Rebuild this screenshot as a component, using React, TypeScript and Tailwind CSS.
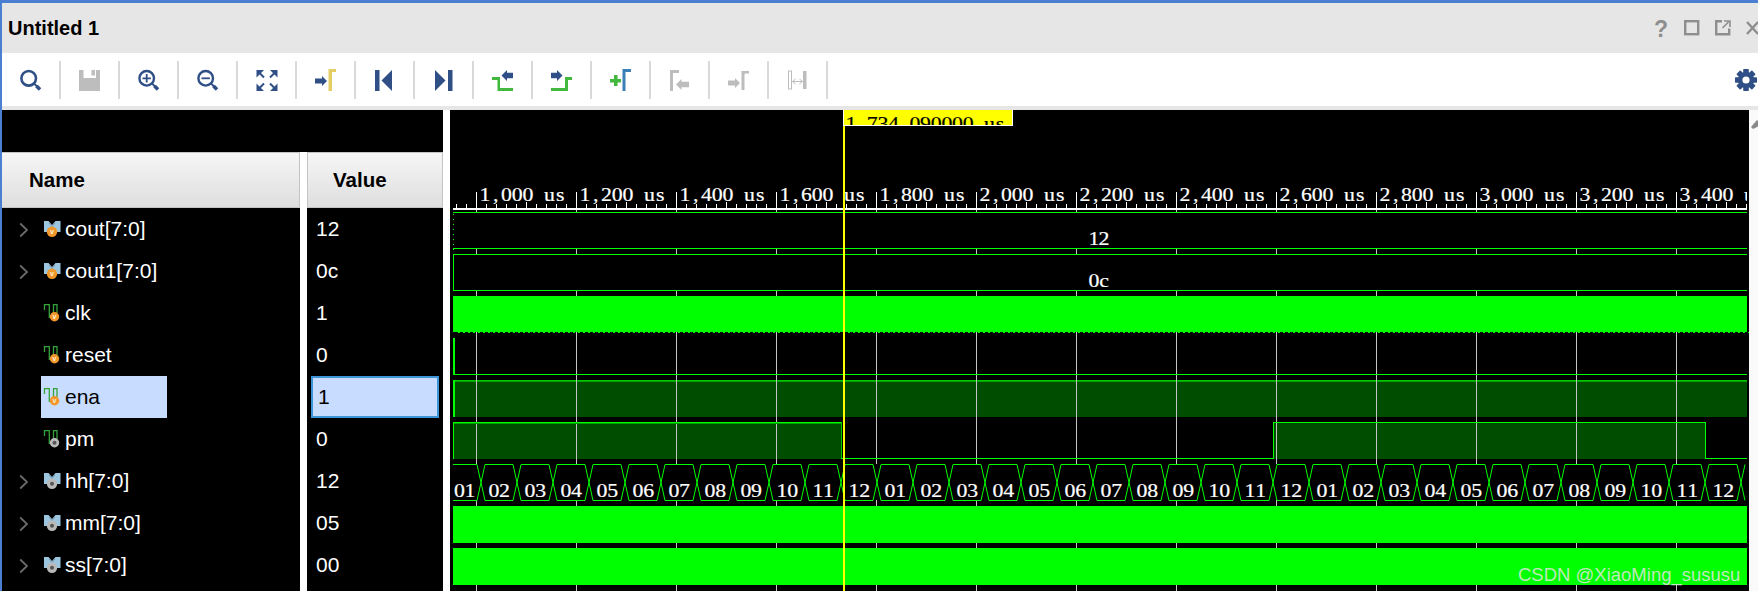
import React from "react";

const NAVY = "#2f4f86";
const GREEN = "#43b83f";
const GRAY = "#bdbdbd";

function Arrow({ x, y, w, h, dir, color }: { x: number; y: number; w: number; h: number; dir: "l" | "r"; color: string }) {
  const head = h * 0.5;
  const t = h * 0.25;
  const d =
    dir === "r"
      ? `M${x} ${y + t}H${x + w - head}V${y}L${x + w} ${y + h / 2}L${x + w - head} ${y + h}V${y + h - t}H${x}Z`
      : `M${x + w} ${y + t}H${x + head}V${y}L${x} ${y + h / 2}L${x + head} ${y + h}V${y + h - t}H${x + w}Z`;
  return <path d={d} fill={color} />;
}

function Ico({ children }: { children: React.ReactNode }) {
  return (
    <svg width="22" height="22" viewBox="0 0 22 22" shapeRendering="geometricPrecision">
      {children}
    </svg>
  );
}

function Lens({ sw }: { sw: number }) {
  return (
    <>
      <circle cx="8.7" cy="9.3" r="7.3" fill="none" stroke={NAVY} strokeWidth={sw} />
      <path d="M14 14.5l3 3" stroke={NAVY} strokeWidth="1.8" />
      <path d="M16.5 17l3.5 3.5" stroke={NAVY} strokeWidth="3.6" />
    </>
  );
}

const icons: React.ReactNode[] = [
  <Ico key="a">
    <Lens sw={2.6} />
  </Ico>,
  <Ico key="b">
    <path d="M0 1H4.5V9H17V1H21V22H0Z" fill={GRAY} />
    <rect x="12.5" y="1" width="3.5" height="5.5" fill={GRAY} />
  </Ico>,
  <Ico key="c">
    <Lens sw={2.4} />
    <path d="M4.5 9.3h8.4M8.7 5.1v8.4" stroke={NAVY} strokeWidth="1.8" />
  </Ico>,
  <Ico key="d">
    <Lens sw={2.4} />
    <path d="M4.5 9.3h8.4" stroke={NAVY} strokeWidth="1.8" />
  </Ico>,
  <Ico key="e">
    <path d="M0.5 1H8L0.5 8.5ZM21.5 1H14L21.5 8.5ZM0.5 22H8L0.5 14.5ZM21.5 22H14L21.5 14.5Z" fill={NAVY} />
    <path d="M3 3.5l5 5M19 3.5l-5 5M3 19.5l5-5M19 19.5l-5-5" stroke={NAVY} strokeWidth="2" />
  </Ico>,
  <Ico key="f">
    <Arrow x={0} y={7} w={12} h={10} dir="r" color={NAVY} />
    <path d="M13.5 22V0H21V3H17V22Z" fill="#e4cd62" />
  </Ico>,
  <Ico key="g">
    <rect x="1" y="1" width="4.5" height="21" fill={NAVY} />
    <path d="M18 1V22L7.5 11.5Z" fill={NAVY} />
  </Ico>,
  <Ico key="h">
    <path d="M2 1V22L12.5 11.5Z" fill={NAVY} />
    <rect x="15" y="1" width="4.5" height="21" fill={NAVY} />
  </Ico>,
  <Ico key="i">
    <path d="M0 8H8V19H21V22H5.5V11H0Z" fill={GREEN} />
    <Arrow x={9.5} y={1} w={11.5} h={11} dir="l" color={NAVY} />
  </Ico>,
  <Ico key="j">
    <path d="M0 19H14V8H21V11H17V22H0Z" fill={GREEN} />
    <Arrow x={0} y={1} w={11.5} h={11} dir="r" color={NAVY} />
  </Ico>,
  <Ico key="k">
    <path d="M0 10H4V6H7.5V10H11V13.5H7.5V17H4V13.5H0Z" fill={GREEN} />
    <path d="M12.5 22V0H21V3H15.5V22Z" fill="#3a7fb5" />
  </Ico>,
  <Ico key="l">
    <path d="M1 22V1H10V4H4V22Z" fill={GRAY} />
    <Arrow x={7} y={10} w={13} h={11} dir="l" color={GRAY} />
  </Ico>,
  <Ico key="m">
    <Arrow x={0} y={9} w={12} h={10} dir="r" color={GRAY} />
    <path d="M13.5 21V2H21V4.5H16.5V21Z" fill={GRAY} />
  </Ico>,
  <Ico key="n">
    <rect x="1.5" y="2" width="3" height="18" fill="none" stroke={GRAY} strokeWidth="1" />
    <rect x="16" y="2" width="3.5" height="18" fill={GRAY} />
    <path d="M5.5 12.5h10M5.5 12.5l3-2.5M5.5 12.5l3 2.5M15.5 12.5l-3-2.5M15.5 12.5l-3 2.5" stroke={GRAY} strokeWidth="1" fill="none" />
  </Ico>,
];

function Gear() {
  return (
    <svg width="22" height="22" viewBox="0 0 22 22">
      {[0, 45, 90, 135].map((a) => (
        <rect key={a} x="8.2" y="0" width="5.6" height="22" rx="0.8" fill={NAVY} transform={`rotate(${a} 11 11)`} />
      ))}
      <circle cx="11" cy="11" r="8" fill={NAVY} />
      <circle cx="11" cy="11" r="3.6" fill="#fff" />
    </svg>
  );
}

function Medal({ cx, cy, orange, r }: { cx: number; cy: number; orange: boolean; r: number }) {
  return orange ? (
    <g>
      <circle cx={cx} cy={cy} r={r} fill="#f0962b" />
      <text x={cx} y={cy + 2.6} textAnchor="middle" fontSize="7" fontWeight="700" fill="#fff2d8" className="font-['Liberation_Sans']">
        v
      </text>
    </g>
  ) : (
    <g>
      <circle cx={cx} cy={cy} r={r} fill="#b9b9b9" />
      <circle cx={cx} cy={cy} r="2" fill="#555" />
    </g>
  );
}

function SigIcon({ bus, orange }: { bus: boolean; orange: boolean }) {
  return (
    <svg width="19" height="18" viewBox="0 0 19 18" className="shrink-0">
      {bus ? (
        <>
          <path d="M1 1H5.5L9 5L12.5 1H17.5V12H1Z" fill="#9cc6e0" />
          <path d="M6 3l3 3.5L12 3" stroke="#6f8ea3" strokeWidth="0.8" fill="none" />
        </>
      ) : (
        <>
          <path d="M1.5 6V0.7H6.3V14" fill="none" stroke="#35a23a" strokeWidth="1.3" />
          <path d="M10.5 10V0.7H14V9" fill="none" stroke="#35a23a" strokeWidth="1.3" />
        </>
      )}
      <Medal cx={bus ? 9 : 11.5} cy={bus ? 11.8 : 12.8} r={bus ? 5.2 : 4.7} orange={orange} />
    </svg>
  );
}

type Row = { name: string; value: string; bus: boolean; orange: boolean; selected?: boolean };
const rows: Row[] = [
  { name: "cout[7:0]", value: "12", bus: true, orange: true },
  { name: "cout1[7:0]", value: "0c", bus: true, orange: true },
  { name: "clk", value: "1", bus: false, orange: true },
  { name: "reset", value: "0", bus: false, orange: true },
  { name: "ena", value: "1", bus: false, orange: true, selected: true },
  { name: "pm", value: "0", bus: false, orange: false },
  { name: "hh[7:0]", value: "12", bus: true, orange: false },
  { name: "mm[7:0]", value: "05", bus: true, orange: false },
  { name: "ss[7:0]", value: "00", bus: true, orange: false },
];

const SX = 1.15;

function Mono({ s, cx, y, adv, fill }: { s: string; cx: number; y: number; adv: number; fill: string }) {
  const xs = s
    .split("")
    .map((_, i) => ((cx + i * adv) / SX).toFixed(2))
    .join(" ");
  return (
    <g transform={`scale(${SX} 1)`}>
      <text x={xs} y={y} textAnchor="middle" fontSize="19" fill={fill} stroke={fill} strokeWidth="0.2" className="font-['Liberation_Serif']">
        {s}
      </text>
    </g>
  );
}

const X0 = 453;
const X1 = 1747;
const GRID = Array.from({ length: 13 }, (_, i) => 476 + i * 100);
const LABELS = ["1,000", "1,200", "1,400", "1,600", "1,800", "2,000", "2,200", "2,400", "2,600", "2,800", "3,000", "3,200", "3,400"];
const MINOR = Array.from({ length: 130 }, (_, i) => 456 + i * 10).filter((x) => x < X1);
const CROSS = Array.from({ length: 36 }, (_, i) => 481 + i * 36);
const HH_TOP = 464;
const HH_BOT = 500;

function busPath() {
  let d = `M${X0} ${HH_TOP + 0.5}H${CROSS[0] - 4}L${CROSS[0] + 4} ${HH_BOT + 0.5}`;
  let b = `M${X0} ${HH_BOT + 0.5}H${CROSS[0] - 4}L${CROSS[0] + 4} ${HH_TOP + 0.5}`;
  let topOn = false;
  CROSS.slice(1).forEach((c) => {
    d += `H${c - 4}L${c + 4} ${topOn ? HH_BOT + 0.5 : HH_TOP + 0.5}`;
    b += `H${c - 4}L${c + 4} ${topOn ? HH_TOP + 0.5 : HH_BOT + 0.5}`;
    topOn = !topOn;
  });
  return d + b;
}

function Wave() {
  const lime = "#00ff00";
  const dark = "#004d00";
  return (
    <svg width="1299" height="481" viewBox="450 110 1299 481" className="block">
      <defs>
        <clipPath id="bus">
          <rect x={X0} y="110" width={X1 - X0} height="481" />
        </clipPath>
      </defs>
      <rect x="450" y="110" width="1299" height="481" fill="#000" />
      <g shapeRendering="crispEdges">
        <rect x={X0} y="380" width={X1 - X0} height="37" fill={dark} />
        <rect x={X0 + 2} y="381" width={X1 - X0 - 2} height="1" fill="#00a000" />
        <rect x={X0} y="380" width={X1 - X0} height="1" fill="#00c800" />
        <rect x={X0} y="380" width="2" height="37" fill={lime} />
        <rect x={X0} y="422" width="389" height="37" fill={dark} />
        <rect x="1273" y="422" width="433" height="37" fill={dark} />
      </g>
      <g shapeRendering="crispEdges">
        {GRID.map((x) => (
          <rect key={x} x={x} y="208" width="1" height="383" fill="#c4c4c4" />
        ))}
      </g>
      <g shapeRendering="crispEdges">
        <rect x={X0} y="212" width={X1 - X0} height="36" fill="#000" />
        <rect x={X0} y="254" width={X1 - X0} height="36" fill="#000" />
        <rect x={X0} y={HH_TOP} width={X1 - X0} height="36" fill="#000" />
        <rect x={X0} y="212" width={X1 - X0} height="1" fill={lime} />
        <rect x={X0} y="248" width={X1 - X0} height="1" fill={lime} />
        {Array.from({ length: 8 }, (_, i) => (
          <rect key={i} x={X0} y={214 + i * 5} width="1" height="1" fill={lime} />
        ))}
        <rect x={X0} y="254" width={X1 - X0} height="1" fill={lime} />
        <rect x={X0} y="290" width={X1 - X0} height="1" fill={lime} />
        <rect x={X0} y="254" width="1" height="37" fill={lime} />
        <rect x={X0} y="296" width={X1 - X0} height="36" fill={lime} />
        {Array.from({ length: 259 }, (_, i) => (
          <rect key={i} x={X0 + 5 + i * 5} y="332" width="2" height="1" fill={lime} />
        ))}
        <rect x={X0} y="338" width="2" height="37" fill={lime} />
        <rect x={X0} y="374" width={X1 - X0} height="1" fill={lime} />
        <rect x={X0} y="422" width="389" height="1" fill={lime} />
        <rect x={X0 + 1} y="423" width="387" height="1" fill="#00a000" />
        <rect x={X0} y="422" width="1" height="37" fill={lime} />
        <rect x="841" y="422" width="1" height="37" fill="#00c800" />
        <rect x="841" y="458" width="432" height="1" fill={lime} />
        <rect x="1273" y="422" width="1" height="37" fill={lime} />
        <rect x="1273" y="422" width="433" height="1" fill={lime} />
        <rect x="1705" y="422" width="1" height="37" fill={lime} />
        <rect x="1705" y="458" width={X1 - 1705} height="1" fill={lime} />
        <rect x={X0} y="506" width={X1 - X0} height="37" fill={lime} />
        <rect x={X0} y="548" width={X1 - X0} height="37" fill={lime} />
      </g>
      <g clipPath="url(#bus)">
        <path d={busPath()} fill="none" stroke={lime} strokeWidth="1" />
      </g>
      <Mono s="01" cx={459.5} y={497} adv={10.6} fill="#fff" />
      {CROSS.slice(0, 35).map((c, i) => {
        const n = ((i + 1) % 12) + 1;
        const s = n < 10 ? `0${n}` : `${n}`;
        return <Mono key={c} s={s} cx={c + 13} y={497} adv={10.6} fill="#fff" />;
      })}
      <Mono s="12" cx={1094} y={245} adv={10} fill="#fff" />
      <Mono s="0c" cx={1094} y={287} adv={10} fill="#fff" />
      <g shapeRendering="crispEdges">
        <rect x={X0} y="208" width={X1 - X0} height="1.5" fill="#fff" />
        {MINOR.map((x) => (
          <rect key={x} x={x} y={(x - 476) % 100 === 50 ? 202 : 204} width="1" height={(x - 476) % 100 === 50 ? 6 : 4} fill="#fff" />
        ))}
        {GRID.map((x) => (
          <rect key={x} x={x} y="192" width="1" height="16" fill="#fff" />
        ))}
      </g>
      <g clipPath="url(#bus)">
        {GRID.map((x, i) => (
          <Mono key={x} s={`${LABELS[i]} us`} cx={x + 9} y={201} adv={10.75} fill="#fff" />
        ))}
      </g>
      <svg x="843" y="110" width="170" height="16" viewBox="843 110 170 16">
        <rect x="843" y="110" width="170" height="16" fill="#ffff00" />
        <Mono s="1,734.090000 us" cx={851} y={130} adv={10.65} fill="#000" />
        <rect x="843" y="125" width="170" height="1" fill="#fff" />
        <rect x="1012" y="110" width="1" height="16" fill="#fff" />
      </svg>
      <rect x="843" y="110" width="1" height="16" fill="#fff" shapeRendering="crispEdges" />
      <rect x="843" y="126" width="2.4" height="465" fill="#ffff00" shapeRendering="crispEdges" />
    </svg>
  );
}

export default function App() {
  return (
    <div className="relative h-[591px] w-[1758px] overflow-hidden border-t-[3px] border-l-2 border-[#4a7fd1] bg-white font-['Liberation_Sans',sans-serif] text-[21px]">
      <div className="flex h-[50px] items-center bg-[#e6e6e6] pl-[6px]">
        <span className="-mt-[1px] text-[20px] font-bold text-black">Untitled 1</span>
        <div className="ml-auto flex items-center">
          <svg width="104" height="18" viewBox="0 0 104 18" className="mt-[1px]">
            <text x="7" y="16.5" textAnchor="middle" fontSize="23" fontWeight="700" fill="#8e8e8e" className="font-['Liberation_Sans']">
              ?
            </text>
            <rect x="31.2" y="1.2" width="13" height="13" fill="none" stroke="#8e8e8e" strokeWidth="2.4" />
            <path d="M68 1.2H62.2V14.2H75.2V8.5" fill="none" stroke="#8e8e8e" strokeWidth="2.4" />
            <path d="M68.5 8l6-6M70 1h6v6" fill="none" stroke="#8e8e8e" strokeWidth="1.6" />
            <path d="M93 2l11 12M104 2L93 14" fill="none" stroke="#8e8e8e" strokeWidth="2.4" />
          </svg>
        </div>
      </div>
      <div className="flex h-[53px] items-center bg-white">
        {icons.map((ic, i) => (
          <div key={i} className="flex h-[38px] w-[59px] items-center justify-center border-r-2 border-[#d9d9d9]">
            {ic}
          </div>
        ))}
        <div className="ml-auto mr-[1px] flex items-center">
          <Gear />
        </div>
      </div>
      <div className="h-[4px] bg-[#e6e6e6]" />
      <div className="flex h-[481px]">
        <div className="flex w-[441px] flex-col bg-white">
          <div className="h-[42px] shrink-0 bg-black" />
          <div className="flex flex-1">
            <div className="flex w-[298px] flex-col bg-black">
              <div className="flex h-[56px] items-center border-y border-r border-[#c4c4c4] bg-gradient-to-b from-[#f6f6f6] to-[#dedede] pl-[27px] text-[20.5px] font-bold text-black">
                Name
              </div>
              {rows.map((r) => (
                <div key={r.name} className="flex h-[42px] items-center text-white">
                  <div className="flex w-[39px] shrink-0 justify-center pr-[1px]">
                    {r.bus && (
                      <svg width="10" height="16" viewBox="0 0 10 16" className="mt-[1px] ml-[6px]">
                        <path d="M1.2 1.5L8 8L1.2 14.5" fill="none" stroke="#6a6a6a" strokeWidth="1.8" />
                      </svg>
                    )}
                  </div>
                  <div className={`flex h-[42px] w-[126px] items-center gap-[3px] pl-[2px] ${r.selected ? "bg-[#c8dcff] text-black" : ""}`}>
                    <SigIcon bus={r.bus} orange={r.orange} />
                    <span className="whitespace-nowrap">{r.name}</span>
                  </div>
                </div>
              ))}
            </div>
            <div className="w-[7px]" />
            <div className="flex w-[136px] flex-col bg-black">
              <div className="flex h-[56px] items-center border border-[#c4c4c4] bg-gradient-to-b from-[#f6f6f6] to-[#dedede] pl-[25px] text-[20.5px] font-bold text-black">
                Value
              </div>
              {rows.map((r) =>
                r.selected ? (
                  <div key={r.name} className="flex h-[42px] items-center">
                    <div className="ml-[4px] flex h-[42px] w-[128px] items-center border-2 border-[#3d94d6] bg-[#c8dcff] pl-[5px] text-black">{r.value}</div>
                  </div>
                ) : (
                  <div key={r.name} className="flex h-[42px] items-center pl-[9px] text-white">
                    {r.value}
                  </div>
                ),
              )}
            </div>
          </div>
        </div>
        <div className="w-[7px]" />
        <div className="relative h-[481px] w-[1299px]">
          <Wave />
          <span className="absolute left-[1068px] top-[451px] whitespace-nowrap text-[18.5px] text-[#d4e8d0] opacity-90">CSDN @XiaoMing_sususu</span>
        </div>
        <div className="relative w-[9px] bg-[#fafafa]">
          <svg width="8" height="10" viewBox="0 0 8 10" className="mt-[9px] ml-[2px]">
            <path d="M0 8L6 1L8 3V7L2 10Z" fill="#8a8a8a" />
          </svg>
        </div>
      </div>
    </div>
  );
}
